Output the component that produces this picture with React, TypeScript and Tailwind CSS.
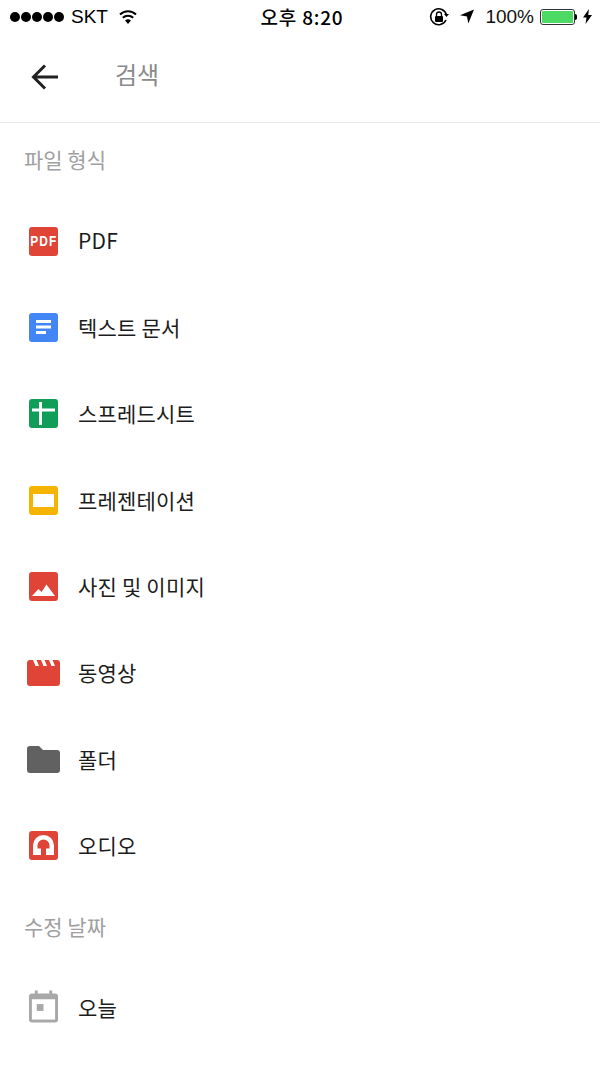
import React from 'react';

const kr = "font-['Noto_Sans_CJK_KR','Noto_Sans',sans-serif]";

const PdfIcon = () => (
  <div className="w-[29px] h-[29px] rounded-[3px] bg-[#df4437] flex items-center justify-center">
    <span className="font-['Liberation_Sans',sans-serif] font-bold text-[14px] leading-none text-white tracking-[1.2px] scale-x-[0.85]">PDF</span>
  </div>
);

const DocIcon = () => (
  <svg width="29" height="29" viewBox="0 0 29 29">
    <rect width="29" height="29" rx="3" fill="#4285f4" />
    <path d="M7 7h15v3H7zM7 12.5h15v3H7zM7 18h10v3H7z" fill="#fff" />
  </svg>
);

const SheetIcon = () => (
  <svg width="29" height="29" viewBox="0 0 29 29">
    <rect width="29" height="29" rx="3" fill="#0f9d58" />
    <path d="M3 9.5h23v3H13V26h-3V12.5H3z" fill="#fff" />
    <rect x="10" y="3" width="3" height="7" fill="#fff" />
  </svg>
);

const SlidesIcon = () => (
  <svg width="29" height="29" viewBox="0 0 29 29">
    <rect width="29" height="29" rx="3" fill="#f4b400" />
    <rect x="4" y="8" width="21" height="13" fill="#fff" />
  </svg>
);

const PhotoIcon = () => (
  <svg width="29" height="29" viewBox="0 0 29 29">
    <rect width="29" height="29" rx="3" fill="#df4437" />
    <path d="M3 24l6.5-7 3 3 5-7.5L26 24z" fill="#fff" />
  </svg>
);

const VideoIcon = () => (
  <svg width="33" height="26" viewBox="0 0 33 26">
    <path d="M0 3a3 3 0 0 1 3-3h27a3 3 0 0 1 3 3v20a3 3 0 0 1-3 3H3a3 3 0 0 1-3-3z" fill="#df4437" />
    <path d="M6 0h3.5l2.5 6H8.500zM14 0h3.500l2.500 6h-3.500zM22 0h3.500l2.500 6h-3.500z" fill="#fff" />
  </svg>
);

const FolderIcon = () => (
  <svg width="33" height="27" viewBox="0 0 33 27">
    <path d="M3 0h9l4 4h14a3 3 0 0 1 3 3v17a3 3 0 0 1-3 3H3a3 3 0 0 1-3-3V3a3 3 0 0 1 3-3z" fill="#616161" />
  </svg>
);

const AudioIcon = () => (
  <svg width="29" height="29" viewBox="0 0 29 29">
    <rect width="29" height="29" rx="3" fill="#df4437" />
    <path d="M4 24V14.500a10.500 10.500 0 0 1 21 0V24z" fill="#fff" />
    <path d="M8.500 17.500v-3a6 6 0 0 1 12 0v3H17V25h-5v-7.500z" fill="#df4437" />
  </svg>
);

const CalendarIcon = () => (
  <svg className="-mt-[2px]" width="30" height="33" viewBox="0 0 30 33">
    <path d="M6 0h3v3h12V0h3v3h3a3 3 0 0 1 3 3v24a3 3 0 0 1-3 3H3a3 3 0 0 1-3-3V6a3 3 0 0 1 3-3h3z" fill="#a8a8a8" />
    <rect x="3" y="9" width="24" height="21" fill="#fff" />
    <rect x="8" y="14" width="7" height="7" fill="#a8a8a8" />
  </svg>
);

// wide icons (video, folder) start a little further left than the square ones
const Row = ({ icon, label, wide }: { icon: React.ReactNode; label: string; wide?: boolean }) => (
  <div className="h-[86.4px] flex items-center">
    <div className={wide ? 'w-[33px] ml-[27px] flex' : 'w-[29px] ml-[29px] flex'}>{icon}</div>
    <span className={`${kr} ${wide ? 'ml-[19px]' : 'ml-[21px]'} text-[21px] tracking-[0.2px] text-[#1c1c1c] -translate-x-[1px]`}>{label}</span>
  </div>
);

export default function App() {
  return (
    <div className="w-[600px] h-[1067px] bg-white overflow-hidden">
      {/* status bar */}
      <div className="h-[33px] flex items-center justify-between pl-[10px] pr-[8px] text-black font-['Liberation_Sans',sans-serif] text-[19px] leading-none">
        <div className="flex items-center w-[200px]">
          <div className="flex gap-[1px]">
            {[0, 1, 2, 3, 4].map((i) => (
              <span key={i} className="w-[10px] h-[10px] rounded-full bg-black" />
            ))}
          </div>
          <span className="ml-[7px]">SKT</span>
          <svg className="ml-[11px]" width="18" height="14" viewBox="0 0 18 14">
            <path d="M9 14L6 10.500a4.500 4.500 0 0 1 6 0z" fill="#000" />
            <path d="M3.800 7.800a7.500 7.500 0 0 1 10.400 0M1 4.500a11.500 11.500 0 0 1 16 0" fill="none" stroke="#000" strokeWidth="2" />
          </svg>
        </div>
        <span className={`${kr} text-[19px] font-medium tracking-[0.8px] whitespace-nowrap translate-x-[1px]`}>
          오후 8:20
        </span>
        <div className="flex items-center justify-end w-[200px]">
          <svg width="20" height="20" viewBox="0 0 20 20">
            <path d="M17 13a8 8 0 1 1 .5-5" fill="none" stroke="#000" strokeWidth="1.6" />
            <path d="M15 7h5l-2.5 3z" fill="#000" />
            <rect x="6" y="9" width="8" height="6" rx="1" fill="#000" />
            <path d="M7.500 9V7.500a2.500 2.500 0 0 1 5 0V9" fill="none" stroke="#000" strokeWidth="1.300" />
          </svg>
          <svg className="ml-[11px]" width="14" height="15" viewBox="0 0 16 16">
            <path d="M16 0L9.500 16 8 8 0 6.500z" fill="#000" />
          </svg>
          <span className="ml-[11px] text-[#111]">100%</span>
          <div className="ml-[6px] w-[35px] h-[16px] border border-[#333] rounded-[3px] p-[1px]">
            <div className="w-full h-full bg-[#4cd964] rounded-[1px]" />
          </div>
          <span className="w-[2px] h-[6px] bg-black rounded-r-[2px]" />
          <svg className="ml-[6px]" width="9" height="15" viewBox="0 0 9 15">
            <path d="M6 0L0 8.500h3.500L2.500 15 9 6H5.200z" fill="#000" />
          </svg>
        </div>
      </div>

      {/* search header */}
      <div className="h-[90px] flex items-center border-b border-[#e8e8e8]">
        <svg className="ml-[31px] -mt-[2px]" width="28" height="28" viewBox="0 0 28 28">
          <path d="M27 14H3M14 2.500L2.500 14 14 25.500" fill="none" stroke="#212121" strokeWidth="3" />
        </svg>
        <span className={`${kr} ml-[56px] text-[24px] text-[#8a8a8a] -mt-[8px]`}>검색</span>
      </div>

      <div className={`${kr} h-[75px] flex items-center pl-[24px] pb-[1px] text-[21px] text-[#a0a0a0]`}>파일 형식</div>

      <Row icon={<PdfIcon />} label="PDF" />
      <Row icon={<DocIcon />} label="텍스트 문서" />
      <Row icon={<SheetIcon />} label="스프레드시트" />
      <Row icon={<SlidesIcon />} label="프레젠테이션" />
      <Row icon={<PhotoIcon />} label="사진 및 이미지" />
      <Row wide icon={<VideoIcon />} label="동영상" />
      <Row wide icon={<FolderIcon />} label="폴더" />
      <Row icon={<AudioIcon />} label="오디오" />

      <div className={`${kr} h-[75px] flex items-center pl-[24px] text-[21px] text-[#a0a0a0]`}>수정 날짜</div>

      <Row icon={<CalendarIcon />} label="오늘" />
    </div>
  );
}
